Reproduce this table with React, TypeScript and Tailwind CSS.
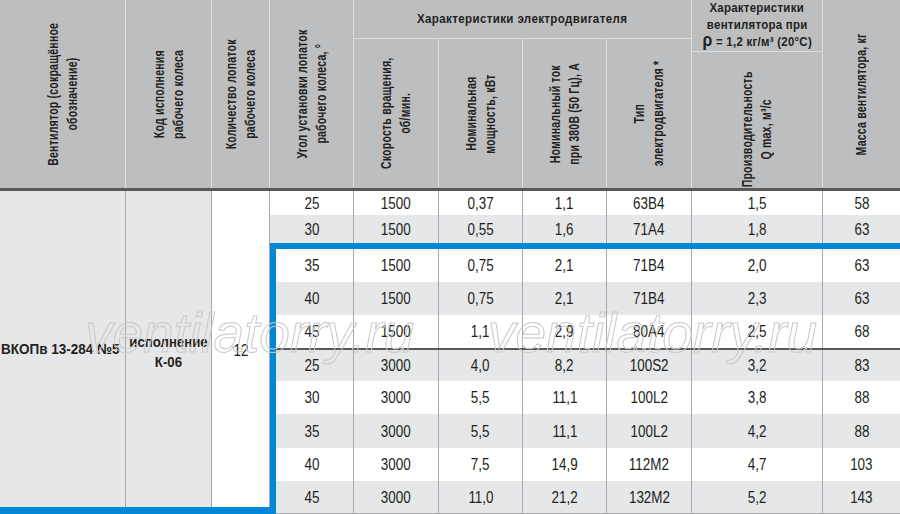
import React from 'react'

const FONT = '"Liberation Sans", Arial, sans-serif'

// data rows: угол, скорость, мощность, ток, тип, Q max, масса
const rows = [
  ['25', '1500', '0,37', '1,1', '63В4', '1,5', '58'],
  ['30', '1500', '0,55', '1,6', '71А4', '1,8', '63'],
  ['35', '1500', '0,75', '2,1', '71В4', '2,0', '63'],
  ['40', '1500', '0,75', '2,1', '71В4', '2,3', '63'],
  ['45', '1500', '1,1', '2,9', '80А4', '2,5', '68'],
  ['25', '3000', '4,0', '8,2', '100S2', '3,2', '83'],
  ['30', '3000', '5,5', '11,1', '100L2', '3,8', '88'],
  ['35', '3000', '5,5', '11,1', '100L2', '4,2', '88'],
  ['40', '3000', '7,5', '14,9', '112M2', '4,7', '103'],
  ['45', '3000', '11,0', '21,2', '132M2', '5,2', '143'],
]

const heights = ['h-[24px]', 'h-[28px]', 'h-[33px]', 'h-[33px]', 'h-[33px]', 'h-[31px]', 'h-[33px]', 'h-[34px]', 'h-[33px]', 'h-[33px]']
const widths = ['w-[84px]', 'w-[85px]', 'w-[84px]', 'w-[84px]', 'w-[85px]', 'w-[131px]', 'w-[77px]']

// rotated header text, condensed along its run
function VText({ children }: { children: React.ReactNode }) {
  return (
    <div className="[writing-mode:vertical-rl] rotate-180 scale-y-[0.75] text-center text-[14px] leading-[19px] font-bold tracking-[0.3px] text-[#231f20] whitespace-nowrap">
      {children}
    </div>
  )
}

function HeadCol({ w, children, last }: { w: string; children: React.ReactNode; last?: boolean }) {
  return (
    <div className={`${w} h-full flex items-center justify-center ${last ? '' : 'border-r border-[#dcdddf]'}`}>
      <VText>{children}</VText>
    </div>
  )
}

function Row({ i, framed }: { i: number; framed?: boolean }) {
  const r = rows[i]
  const bg = i % 2 === 0 ? 'bg-white' : 'bg-[#e6e7e8]'
  return (
    <div className={`flex ${heights[i]} ${bg} ${i === 9 ? 'border-b border-[#a7a9ac]' : ''}`}>
      {r.map((v, j) => {
        const w = framed && j === 0 ? 'w-[78px] pr-[6px]' : widths[j]
        return (
          <div
            key={j}
            className={`${w} flex items-center justify-center text-[16px] leading-none text-[#231f20] ${j < 6 ? 'border-r border-[#a7a9ac]' : ''}`}
          >
            <span className="inline-block scale-x-[0.84] whitespace-nowrap pt-[1px]">{v}</span>
          </div>
        )
      })}
    </div>
  )
}

export default function App() {
  return (
    <div className="relative w-[900px] h-[514px] overflow-hidden bg-white" style={{ fontFamily: FONT }}>
      {/* header */}
      <div className="flex h-[191px] bg-[#bcbec0] border-b-[3px] border-[#58595b]">
        <HeadCol w="w-[126px]">
          Вентилятор (сокращённое
          <br />
          обозначение)
        </HeadCol>
        <HeadCol w="w-[86px]">
          Код исполнения
          <br />
          рабочего колеса
        </HeadCol>
        <HeadCol w="w-[58px]">
          Количество лопаток
          <br />
          рабочего колеса
        </HeadCol>
        <HeadCol w="w-[84px]">
          Угол установки лопаток
          <br />
          рабочего колеса, °
        </HeadCol>

        <div className="w-[338px] h-full flex flex-col border-r border-[#dcdddf]">
          <div className="h-[52px] flex items-center justify-center border-b border-[#dcdddf] text-[13px] font-bold tracking-[0.4px] text-[#231f20]">
            <span className="inline-block scale-x-[0.89] whitespace-nowrap">Характеристики электродвигателя</span>
          </div>
          <div className="flex-1 flex">
            <HeadCol w="w-[85px]">
              Скорость вращения,
              <br />
              об/мин.
            </HeadCol>
            <HeadCol w="w-[84px]">
              Номинальная
              <br />
              мощность, кВт
            </HeadCol>
            <HeadCol w="w-[84px]">
              Номинальный ток
              <br />
              при 380В (50 Гц), А
            </HeadCol>
            <HeadCol w="w-[84px]" last>
              Тип
              <br />
              электродвигателя *
            </HeadCol>
          </div>
        </div>

        <div className="w-[131px] h-full flex flex-col border-r border-[#dcdddf]">
          <div className="h-[52px] flex flex-col items-center justify-center border-b border-[#dcdddf] text-[13px] leading-[16.5px] font-bold tracking-[0.3px] text-[#231f20] text-center">
            <span className="inline-block scale-x-[0.88] whitespace-nowrap">Характеристики</span>
            <span className="inline-block scale-x-[0.88] whitespace-nowrap">вентилятора при</span>
            <span className="inline-block scale-x-[0.88] whitespace-nowrap">
              <span className="text-[18px] leading-[14px]">ρ</span> = 1,2 кг/м³ (20°C)
            </span>
          </div>
          <div className="flex-1 flex">
            <HeadCol w="w-full" last>
              Производительность
              <br />Q max, м³/с
            </HeadCol>
          </div>
        </div>

        <HeadCol w="w-[77px]" last>
          Масса вентилятора, кг
        </HeadCol>
      </div>

      {/* body */}
      <div className="flex h-[323px]">
        <div className="w-[270px] flex border-b-[7px] border-[#0088d6]">
          <div className="w-[126px] bg-[#e6e7e8] border-r border-[#a7a9ac] flex items-center text-[15px] font-bold text-[#231f20] whitespace-nowrap pl-[1px]">
            <span className="inline-block origin-left scale-x-[0.9]">ВКОПв 13-284 №5</span>
          </div>
          <div className="w-[86px] bg-[#e6e7e8] border-r border-[#a7a9ac] flex flex-col items-center justify-center text-[15px] leading-[20px] font-bold text-[#231f20] pt-[6px]">
            <span className="inline-block scale-x-[0.88] whitespace-nowrap">исполнение</span>
            <span className="inline-block scale-x-[0.88] whitespace-nowrap">К-06</span>
          </div>
          <div className="w-[58px] bg-white border-r border-[#a7a9ac] flex items-center justify-center text-[16px] text-[#231f20] pt-[4px]">
            <span className="inline-block scale-x-[0.84]">12</span>
          </div>
        </div>

        <div className="w-[630px] flex flex-col">
          <Row i={0} />
          <Row i={1} />
          <div className="flex-1 flex flex-col border-t-[6px] border-l-[6px] border-[#0088d6]">
            <Row i={2} framed />
            <Row i={3} framed />
            <Row i={4} framed />
            <div className="h-[2px] bg-[#58595b]" />
            <Row i={5} framed />
            <Row i={6} framed />
            <Row i={7} framed />
            <Row i={8} framed />
            <Row i={9} framed />
          </div>
        </div>
      </div>

      {/* watermark */}
      <div className="pointer-events-none absolute left-0 top-[306px] w-full h-[62px]">
        <span className="absolute left-[85px] top-0 text-[55px] leading-none italic text-transparent [-webkit-text-stroke:1px_#c9c9c9] whitespace-nowrap">
          ventilatorry.ru
        </span>
        <span className="absolute left-[488px] top-0 text-[55px] leading-none italic text-transparent [-webkit-text-stroke:1px_#c9c9c9] whitespace-nowrap">
          ventilatorry.ru
        </span>
      </div>
    </div>
  )
}
